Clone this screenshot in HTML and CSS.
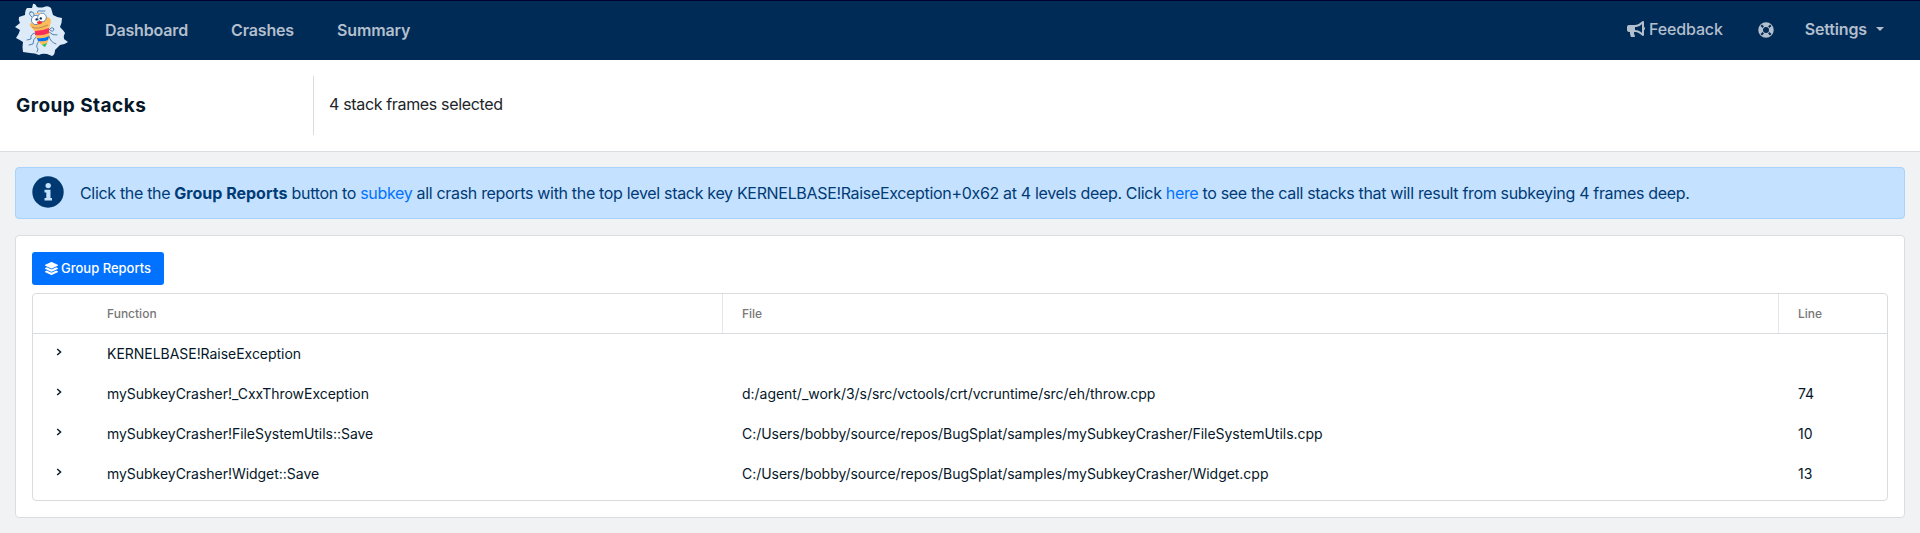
FILE: index.html
```html
<!DOCTYPE html>
<html lang="en">
<head>
<meta charset="utf-8">
<title>Group Stacks</title>
<link rel="stylesheet" href="styles.css">
</head>
<body>
<header class="navbar">
  <svg class="logo" viewBox="0 0 54 54" fill="none">
    <path d="M18 1 Q20 0 22 4 Q26 5 29 4 Q33 2 36 5 L38 12 Q43 15 47 15 Q47 20 45 24 Q49 28 50 30 Q48 33 49 36 L53 39 Q49 42 45 42 Q42 45 40 47 Q40 52 37 53 L32 51 Q27 50 24 52 Q20 50 15 50 L8 49 Q7 44 8 39 Q5 37 1 35 Q4 31 5 27 L0 24 L5 20 Q3 17 4 14 L10 12 Q10 7 12 5 L17 5Z" fill="#dcebf7"/>
    <g stroke="#2c67a7" stroke-width=".8" stroke-linecap="round">
      <path d="M19 13Q20 8 15 9M17 14Q12 10 16 9M23 11Q21 7 26 8L30 8"/>
      <path d="M20 30Q15 31 16 36L12 37M21 34Q18 36 18 41L14 42M24 38Q20 43 23 46L22 49M34 27Q37 23 39 26Q38 30 35 27M34 29Q38 33 42 32M34 33Q35 39 41 41"/>
    </g>
    <path d="M16 20Q13 22 17 25L20 29Q20 38 30 44Q36 35 34 27L35 22Q38 15 32 14L24 12Z" fill="#fcbc5c"/>
    <path d="M17 24Q22 27 33 22" stroke="#a87a4a" stroke-width=".8"/>
    <path d="M20 28Q27 28 34 25L34 30Q28 33 20 32Z" fill="#fb2e58"/>
    <path d="M22 35Q29 36 34 33L33 37Q29 39 23 38Z" fill="#0071f9"/>
    <path d="M27 42L32 40L30 44Z" fill="#15c56f"/>
    <circle cx="21" cy="17" r="4.6" fill="#fff" stroke="#2c67a7" stroke-width=".7"/>
    <circle cx="27" cy="14.5" r="4.3" fill="#fff" stroke="#2c67a7" stroke-width=".7"/>
    <circle cx="21.6" cy="16.4" r="1.2" fill="#002b57"/><circle cx="25.8" cy="15.4" r="1.2" fill="#002b57"/>
    <ellipse cx="24.5" cy="19.6" rx="2.6" ry="1.7" fill="#fb2e38"/>
    <path d="M20 11L26 10" stroke="#fcbc5c" stroke-width="1.2"/>
  </svg>
  <nav class="links"><a>Dashboard</a><a>Crashes</a><a>Summary</a></nav>
  <div class="tools">
    <a class="feedback"><svg class="horn" viewBox="0 0 576 512"><path fill="currentColor" d="M576 240c0-23.600-13-44-32-55V32c0-8.700-7-32-32-32-7.100 0-14.200 2.400-20 7l-85 68c-42.700 34.100-96.300 53-151 53H64c-35.300 0-64 28.700-64 64v96c0 35.300 28.700 64 64 64h33.700c-1.400 10.500-2.200 21.200-2.200 32 0 39.800 9.300 77.400 25.600 110.900 5.200 10.700 16.500 17.100 28.400 17.100h74.300c26 0 41.700-29.800 25.900-50.500-16.400-21.500-26.200-48.400-26.200-77.500 0-11.100 1.600-21.800 4.400-32H256c54.700 0 108.300 18.900 151 53l85 68c5.700 4.500 12.700 7 20 7 24.900 0 32-22.800 32-32V295c19-11 32-31.400 32-55zm-96 141.400l-33-26.500C392.900 311.600 325.200 288 256 288v-96c69.200 0 136.900-23.600 191-66.900l33-26.500v282.800z"/></svg><span>Feedback</span></a>
    <svg class="ring" viewBox="0 0 512 512"><path fill="currentColor" fill-rule="evenodd" d="M256 8a248 248 0 1 0 0 496 248 248 0 0 0 0-496zm173.700 119.500l-63.500 63.500a128 128 0 0 0-45-45l63.500-63.500a210 210 0 0 1 45 45zM256 352a96 96 0 1 1 0-192 96 96 0 0 1 0 192zM127.500 82.300l63.500 63.500a128 128 0 0 0-45 45l-63.500-63.500a210 210 0 0 1 45-45zM82.300 384.500l63.500-63.500a128 128 0 0 0 45 45l-63.500 63.500a210 210 0 0 1-45-45zM384.500 429.700L321 366.200a128 128 0 0 0 45-45l63.500 63.500a210 210 0 0 1-45 45z"/></svg>
    <a class="settings">Settings<i class="caret"></i></a>
  </div>
</header>
<section class="titlebar">
  <h1>Group Stacks</h1>
  <p class="selected">4 stack frames selected</p>
</section>
<main>
  <div class="alert">
    <svg class="info" viewBox="0 0 32 32"><circle cx="16" cy="16" r="15.700" fill="#003872"/><circle cx="16.200" cy="9.600" r="2.700" fill="#c4e1ff"/><path fill="#c4e1ff" d="M12.500 13.800h6v8.200h1.500v2.500h-7.500V22h1.800v-5.500h-1.800z"/></svg>
    <p class="message">Click the the <b>Group Reports</b> button to <a>subkey</a> all crash reports with the top level stack key KERNELBASE!RaiseException+0x62 at 4 levels deep. Click <a>here</a> to see the call stacks that will result from subkeying 4 frames deep.</p>
  </div>
  <div class="card">
    <button class="group-btn"><svg class="layers" viewBox="0 0 512 512"><path fill="currentColor" d="M12.400 148l232.900 105.700c6.800 3.100 14.500 3.100 21.300 0L499.600 148c16.500-7.500 16.500-32.500 0-40L266.600 2.300a25.600 25.600 0 0 0-21.300 0L12.400 108c-16.500 7.500-16.500 32.500 0 40zm487.200 88.300l-58.100-26.300-161.600 73.300c-7.600 3.400-15.600 5.200-23.900 5.200s-16.300-1.700-23.900-5.200L70.500 210l-58.100 26.300c-16.500 7.500-16.500 32.500 0 40l232.900 105.600c6.800 3.100 14.500 3.100 21.300 0l233-105.600c16.500-7.500 16.500-32.500 0-40zm0 127.800l-57.900-26.200-161.800 73.400c-7.600 3.400-15.600 5.200-23.900 5.200s-16.300-1.700-23.900-5.200L70.300 337.900l-57.900 26.200c-16.500 7.500-16.500 32.500 0 40l232.900 105.600c6.800 3.100 14.500 3.100 21.300 0l233-105.600c16.500-7.500 16.500-32.500 0-40z"/></svg><span>Group Reports</span></button>
    <div class="table">
      <div class="row head"><span></span><span>Function</span><span class="line-left">File</span><span class="line-left">Line</span></div>
      <div class="row"><span class="expand"><svg viewBox="0 0 6 8"><path d="M1.200 1L4.600 4L1.200 7"/></svg></span><span>KERNELBASE!RaiseException</span><span></span><span></span></div>
      <div class="row"><span class="expand"><svg viewBox="0 0 6 8"><path d="M1.200 1L4.600 4L1.200 7"/></svg></span><span>mySubkeyCrasher!_CxxThrowException</span><span>d:/agent/_work/3/s/src/vctools/crt/vcruntime/src/eh/throw.cpp</span><span>74</span></div>
      <div class="row"><span class="expand"><svg viewBox="0 0 6 8"><path d="M1.200 1L4.600 4L1.200 7"/></svg></span><span>mySubkeyCrasher!FileSystemUtils::Save</span><span>C:/Users/bobby/source/repos/BugSplat/samples/mySubkeyCrasher/FileSystemUtils.cpp</span><span>10</span></div>
      <div class="row"><span class="expand"><svg viewBox="0 0 6 8"><path d="M1.200 1L4.600 4L1.200 7"/></svg></span><span>mySubkeyCrasher!Widget::Save</span><span>C:/Users/bobby/source/repos/BugSplat/samples/mySubkeyCrasher/Widget.cpp</span><span>13</span></div>
    </div>
  </div>
</main>
</body>
</html>
```
FILE: styles.css
```css
* { box-sizing: border-box; }
body {
  margin: 0;
  height: 533px;
  overflow: hidden;
  background: #f1f2f4;
  color: #212529;
  font: 16px/24px Inter, "Liberation Sans", sans-serif;
}
h1, p { margin: 0; }
.navbar {
  display: flex;
  align-items: center;
  height: 60px;
  padding: 0 36px 0 15px;
  border-top: 1px solid #000030;
  background: #002b57;
  color: #b3bfcd;
  font-weight: 600;
  letter-spacing: -.15px;
}
.logo { width: 54px; height: 54px; margin-bottom: 1px; }
.links { display: flex; gap: 43px; margin-left: 36px; padding-bottom: 2px; }
.tools { display: flex; align-items: center; margin-left: auto; padding-bottom: 3px; }
.feedback { display: flex; align-items: center; gap: 4px; font-weight: 500; }
.horn { width: 18px; height: 16px; }
.ring { width: 16px; height: 16px; margin: 1px 31px 0 35px; }
.settings { display: flex; align-items: center; gap: 9px; }
.caret { border: 4px solid transparent; border-top-color: currentColor; border-bottom: 0; margin-top: -1px; }
.titlebar {
  display: flex;
  align-items: center;
  height: 92px;
  padding-left: 16px;
  border-bottom: 1px solid #dadde0;
  background: #fff;
}
h1 { width: 297px; font-size: 19px; font-weight: 700; letter-spacing: .45px; color: #051729; }
.selected { height: 59px; padding-left: 15px; border-left: 1px solid #dadde0; line-height: 57px; letter-spacing: -.34px; }
main { padding: 15px; }
.alert {
  display: flex;
  align-items: center;
  height: 52px;
  padding: 0 16px;
  border: 1px solid #a8d3ff;
  border-radius: 4px;
  background: #c4e1ff;
  color: #003b76;
}
.info { width: 32px; height: 32px; margin-top: -2px; }
.message { margin-left: 16px; white-space: nowrap; letter-spacing: -.325px; }
.message b { letter-spacing: 0; }
.message a { color: #0072ff; }
.card {
  height: 283px;
  margin-top: 16px;
  padding: 16px;
  border: 1px solid #dadde0;
  border-radius: 4px;
  background: #fff;
}
.group-btn {
  display: flex;
  align-items: center;
  gap: 3px;
  width: 132px;
  height: 33px;
  padding: 0 0 1px 13px;
  border: 0;
  border-radius: 3px;
  background: #0072ff;
  color: #fff;
  font: 500 13px/20px Inter, "Liberation Sans", sans-serif;
  white-space: nowrap;
}
.layers { width: 13px; height: 13px; }
.table {
  height: 208px;
  margin-top: 8px;
  border: 1px solid #d9dcdf;
  border-radius: 4px;
  color: #051729;
  font-size: 14px;
  letter-spacing: -.03px;
}
.row { display: grid; grid-template-columns: 74px 615px 1056px 1fr; height: 40px; line-height: 40px; white-space: nowrap; }
.row > :nth-child(n+3) { padding-left: 20px; }
.head { color: #777; font-size: 12px; font-weight: 500; border-bottom: 1px solid #d9dcdf; line-height: 39px; letter-spacing: 0; }
.row > .line-left { border-left: 1px solid #e4e6e8; padding-left: 19px; }
.expand { padding: 14px 0 0 23px; line-height: 0; }
.expand svg { width: 6px; height: 8px; fill: none; stroke: #051729; stroke-width: 1.400; }
```
